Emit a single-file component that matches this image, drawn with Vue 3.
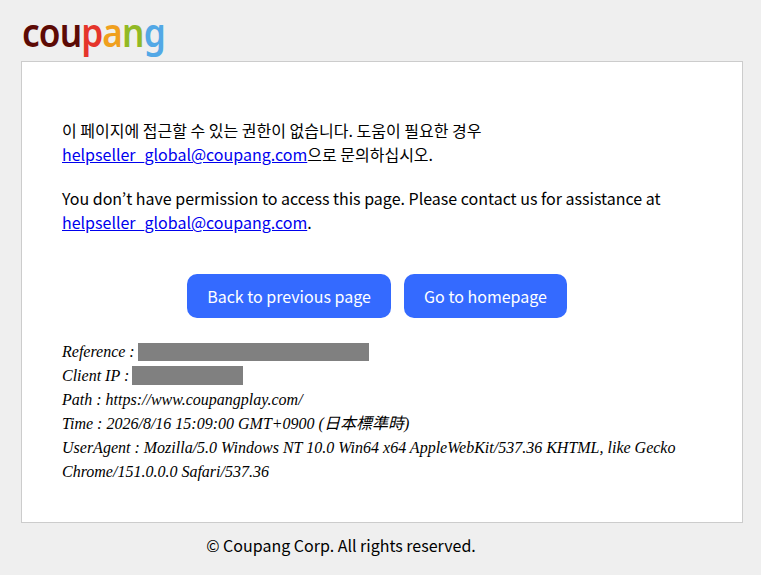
<script setup>
const details = [
  'Path : https://www.coupangplay.com/',
  'Time : 2026/8/16 15:09:00 GMT+0900 (日本標準時)',
  'UserAgent : Mozilla/5.0 Windows NT 10.0 Win64 x64 AppleWebKit/537.36 KHTML, like Gecko Chrome/151.0.0.0 Safari/537.36'
]
</script>

<template>
  <div class="page">
    <header class="logo" aria-label="coupang">
      <div class="wordmark"><span class="c1">cou</span><span class="c2">p</span><span class="c3">a</span><span class="c4">n</span><span class="c5">g</span></div>
    </header>
    <main class="card">
      <p class="msg">이 페이지에 접근할 수 있는 권한이 없습니다. 도움이 필요한 경우<br><a href="#">helpseller_global@coupang.com</a>으로 문의하십시오.</p>
      <p class="msg">You don’t have permission to access this page. Please contact us for assistance at <a href="#">helpseller_global@coupang.com</a>.</p>
      <div class="actions">
        <button class="btn wide">Back to previous page</button>
        <button class="btn narrow">Go to homepage</button>
      </div>
      <div class="details">
        <div>Reference : <span class="mask ref"></span></div>
        <div>Client IP : <span class="mask ip"></span></div>
        <div v-for="line in details" :key="line">{{ line }}</div>
      </div>
    </main>
    <footer class="foot">© Coupang Corp. All rights reserved.</footer>
  </div>
</template>

<style>
html, body { margin: 0; background: #efefef; }
</style>

<style scoped>
.page {
  width: 761px;
  height: 575px;
  overflow: hidden;
  background: #efefef;
  font-family: "Noto Sans CJK KR", "Noto Sans", sans-serif;
  font-size: 16px;
  line-height: 24px;
  color: #000;
}
.logo {
  height: 61px;
  box-sizing: border-box;
  padding: 7px 0 0 22px;
}
.wordmark {
  display: inline-block;
  font-family: "Noto Sans", sans-serif;
  font-size: 40px;
  font-weight: 600;
  line-height: 50px;
  letter-spacing: -1px;
  transform: scaleX(0.88);
  transform-origin: left center;
}
.c1 { color: #5c0a05; }
.c2 { color: #e5352b; }
.c3 { color: #f0a01e; }
.c4 { color: #92b925; }
.c5 { color: #52a8e6; }
.card {
  width: 722px;
  height: 462px;
  margin-left: 21px;
  box-sizing: border-box;
  padding: 56px 40px 0;
  background: #fff;
  border: 1px solid #ccc;
}
.msg { margin: 0 0 20px; }
.msg a { color: #0000ee; text-decoration: underline; }
.actions {
  display: flex;
  justify-content: center;
  gap: 13px;
  padding-right: 10px;
  margin-top: 40px;
}
.btn {
  height: 44px;
  border: 0;
  border-radius: 10px;
  background: #346aff;
  color: #fff;
  font: inherit;
  font-size: 16px;
  padding: 0;
}
.wide { width: 204px; }
.narrow { width: 163px; }
.details {
  margin-top: 22px;
  font-family: "Liberation Serif", "Noto Sans CJK TC", serif;
  font-style: italic;
  font-size: 16px;
  line-height: 24px;
}
.mask {
  display: inline-block;
  height: 18px;
  margin-left: -1px;
  vertical-align: -4px;
  background: #808080;
}
.ref { width: 231px; }
.ip { width: 111px; height: 19px; }
.foot {
  width: 682px;
  margin-top: 10px;
  text-align: center;
}
</style>
